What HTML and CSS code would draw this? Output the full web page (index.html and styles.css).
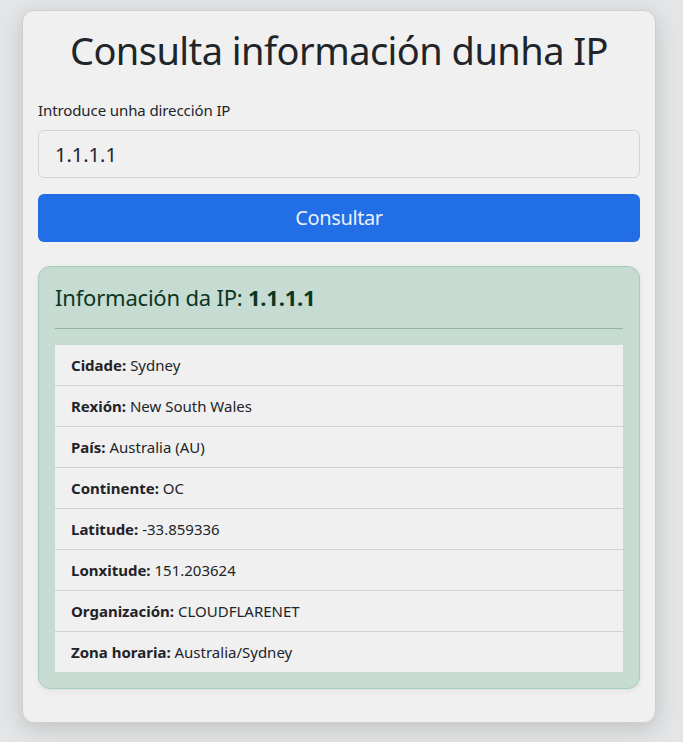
FILE: index.html
```html
<!DOCTYPE html>
<html lang="gl">
<head>
<meta charset="utf-8">
<title>Consulta información dunha IP</title>
<link rel="stylesheet" href="styles.css">
</head>
<body>
<main class="card">
  <h1 class="title">Consulta información dunha IP</h1>
  <form class="form">
    <label class="label" for="ip">Introduce unha dirección IP</label>
    <input class="input" id="ip" type="text" value="1.1.1.1">
    <button class="btn" type="button">Consultar</button>
  </form>
  <section class="result">
    <h4 class="result-title">Información da IP: <strong>1.1.1.1</strong></h4>
    <hr class="sep">
    <ul class="list">
      <li class="item"><strong>Cidade:</strong> Sydney</li>
      <li class="item"><strong>Rexión:</strong> New South Wales</li>
      <li class="item"><strong>País:</strong> Australia (AU)</li>
      <li class="item"><strong>Continente:</strong> OC</li>
      <li class="item"><strong>Latitude:</strong> -33.859336</li>
      <li class="item"><strong>Lonxitude:</strong> 151.203624</li>
      <li class="item"><strong>Organización:</strong> CLOUDFLARENET</li>
      <li class="item"><strong>Zona horaria:</strong> Australia/Sydney</li>
    </ul>
  </section>
</main>
</body>
</html>
```

FILE: styles.css
```css
* { box-sizing: border-box; }
html, body { height: 100%; }
body {
  margin: 0;
  padding: 10px 27px 0 22px;
  background: #e4e5e6;
  font-family: "Noto Sans", "Open Sans", sans-serif;
  color: #212529;
}
.card {
  background: #f0f0f0;
  border: 1px solid #cfcfcf;
  border-radius: 12px;
  box-shadow: 0 6px 22px rgba(0,0,0,0.16);
  padding: 15px 15px 33px;
}
.title {
  margin: 0 0 24px;
  font-size: 38px;
  font-weight: 400;
  line-height: 48px;
  letter-spacing: -0.55px;
  text-align: center;
  color: #212529;
}
.form { display: flex; flex-direction: column; }
.label {
  font-size: 15px;
  line-height: 24px;
  letter-spacing: -0.1px;
  margin-bottom: 8px;
}
.input {
  font: inherit;
  font-size: 20px;
  line-height: 30px;
  padding: 8px 16px;
  height: 48px;
  border: 1px solid #d4d4d4;
  border-radius: 6px;
  background: #f0f0f0;
  color: #212529;
  margin-bottom: 16px;
}
.btn {
  font: inherit;
  font-size: 20px;
  line-height: 30px;
  letter-spacing: -0.4px;
  height: 48px;
  border: 0;
  border-radius: 6px;
  background: #216ee6;
  color: #e9f0fc;
}
.result {
  margin-top: 24px;
  background: #c6dbd2;
  border: 1px solid #a6cdba;
  border-radius: 12px;
  padding: 16px;
  box-shadow: 0 2px 6px rgba(0,0,0,0.06);
}
.result-title {
  margin: 0;
  font-size: 22px;
  font-weight: 400;
  line-height: 29px;
  letter-spacing: -0.2px;
  color: #0a3622;
}
.result-title strong { font-weight: 700; }
.sep {
  margin: 16px 0;
  border: 0;
  border-top: 1px solid #93b3a5;
}
.list {
  list-style: none;
  margin: 0;
  padding: 0;
}
.item {
  background: #f0f0f0;
  padding: 8px 16px;
  font-size: 15px;
  line-height: 24px;
  border-top: 1px solid #d2d2d2;
}
.item:first-child { border-top: 0; }
.item strong { font-weight: 700; color: #1f2328; }
```
